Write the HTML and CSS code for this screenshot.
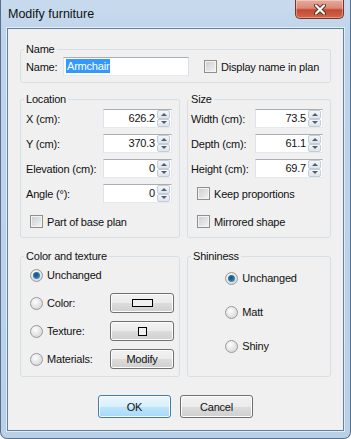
FILE: index.html
```html
<!DOCTYPE html>
<html lang="en">
<head>
    <meta charset="UTF-8">
    <title>Modify furniture</title>
    <link rel="stylesheet" href="styles.css">
</head>
<body>
    <div class="window">
        <div class="titlebar">
            <span class="title">Modify furniture</span>
            <div class="close">
                <svg width="14" height="11" viewBox="0 0 14 11">
                    <path d="M3 1.5 L11 9.5 M11 1.5 L3 9.5" stroke="#5a2a22" stroke-width="4" stroke-linecap="round"/>
                    <path d="M3 1.5 L11 9.5 M11 1.5 L3 9.5" stroke="#fff" stroke-width="2.2" stroke-linecap="round"/>
                </svg>
            </div>
        </div>
        <div class="client">
            <fieldset class="group name-group">
                <legend>Name</legend>
                <div class="name-row">
                    <span class="name-label">Name:</span>
                    <div class="field name-field"><span class="selected">Armchair</span></div>
                    <span class="checkbox name-check"></span>
                    <span class="check-text">Display name in plan</span>
                </div>
            </fieldset>

            <div class="columns">
                <fieldset class="group location">
                    <legend>Location</legend>
                    <div class="spin-grid loc-grid">
                        <span>X (cm):</span>
                        <div class="spinner"><div class="field">626.2</div><div class="arrows"><span class="up"></span><span class="down"></span></div></div>
                        <span>Y (cm):</span>
                        <div class="spinner"><div class="field">370.3</div><div class="arrows"><span class="up"></span><span class="down"></span></div></div>
                        <span>Elevation (cm):</span>
                        <div class="spinner"><div class="field">0</div><div class="arrows"><span class="up"></span><span class="down"></span></div></div>
                        <span>Angle (°):</span>
                        <div class="spinner"><div class="field">0</div><div class="arrows"><span class="up"></span><span class="down"></span></div></div>
                    </div>
                    <div class="check-row loc-check"><span class="checkbox"></span><span class="check-text">Part of base plan</span></div>
                </fieldset>
                <fieldset class="group size">
                    <legend>Size</legend>
                    <div class="spin-grid size-grid">
                        <span>Width (cm):</span>
                        <div class="spinner"><div class="field">73.5</div><div class="arrows"><span class="up"></span><span class="down"></span></div></div>
                        <span>Depth (cm):</span>
                        <div class="spinner"><div class="field">61.1</div><div class="arrows"><span class="up"></span><span class="down"></span></div></div>
                        <span>Height (cm):</span>
                        <div class="spinner"><div class="field">69.7</div><div class="arrows"><span class="up"></span><span class="down"></span></div></div>
                        <div class="check-row size-check"><span class="checkbox"></span><span class="check-text">Keep proportions</span></div>
                    </div>
                    <div class="check-row size-check mirrored"><span class="checkbox"></span><span class="check-text">Mirrored shape</span></div>
                </fieldset>
            </div>

            <div class="columns lower">
                <fieldset class="group color">
                    <legend>Color and texture</legend>
                    <div class="color-grid">
                        <div class="radio-row"><span class="radio on"></span><span>Unchanged</span></div>
                        <span></span>
                        <div class="radio-row"><span class="radio"></span><span>Color:</span></div>
                        <div class="button small"><span class="swatch-rect"></span></div>
                        <div class="radio-row"><span class="radio"></span><span>Texture:</span></div>
                        <div class="button small"><span class="swatch-square"></span></div>
                        <div class="radio-row"><span class="radio"></span><span>Materials:</span></div>
                        <div class="button small">Modify</div>
                    </div>
                </fieldset>
                <fieldset class="group shininess">
                    <legend>Shininess</legend>
                    <div class="shine-list">
                        <div class="radio-row"><span class="radio on"></span><span>Unchanged</span></div>
                        <div class="radio-row"><span class="radio"></span><span>Matt</span></div>
                        <div class="radio-row"><span class="radio"></span><span>Shiny</span></div>
                    </div>
                </fieldset>
            </div>

            <div class="buttons">
                <div class="button default">OK</div>
                <div class="button">Cancel</div>
            </div>
        </div>
    </div>
</body>
</html>
```

FILE: styles.css
```css
* {
    box-sizing: border-box;
}
body {
    margin: 0;
    font-family: "Liberation Sans", Arial, sans-serif;
    font-size: 11px;
    letter-spacing: -0.2px;
    color: #111;
}
.window {
    width: 351px;
    height: 439px;
    border: 1px solid #56718f;
    border-top: none;
    border-radius: 0 0 7px 7px;
    background: linear-gradient(to bottom, #c8dbee 0, #bfd4ea 40px, #bad0e7 100%);
}
.titlebar {
    display: flex;
    justify-content: space-between;
    align-items: flex-start;
    height: 28px;
    padding: 0 6px 0 7px;
}
.title {
    margin-top: 7px;
    font-size: 12.5px;
    letter-spacing: 0;
    color: #111;
}
.close {
    width: 49px;
    height: 19px;
    display: flex;
    align-items: center;
    justify-content: center;
    border: 1px solid #7a3326;
    border-top: none;
    border-radius: 0 0 5px 5px;
    background: linear-gradient(to bottom, #e8aa9c 0, #d98a79 45%, #c44a32 55%, #d2654a 100%);
    box-shadow: inset 0 0 0 1px rgba(255, 255, 255, 0.35);
}
.client {
    height: 403px;
    margin: 0 6px;
    padding: 13px 12px 0 12px;
    background: #f0f0f0;
    border: 1px solid #63809d;
    box-shadow: 0 0 0 1px rgba(255, 255, 255, 0.55);
}
.group {
    margin: 0;
    min-width: 0;
    padding: 0 5px 6px 5px;
    border: 1px solid #d5dfe5;
    border-radius: 3px;
}
.group legend {
    padding: 0 2px;
    margin-left: -2px;
    line-height: 15px;
}
.name-row {
    display: flex;
    align-items: center;
    height: 19px;
}
.name-label {
    width: 37px;
}
.field {
    height: 19px;
    background: #fff;
    border: 1px solid;
    border-color: #abadb3 #dbdfe6 #e3e9ef #e2e3ea;
    line-height: 17px;
}
.name-field {
    width: 126px;
    padding-left: 2px;
}
.selected {
    display: inline-block;
    background: #3399ff;
    color: #fff;
    line-height: 14px;
    padding: 0 1px;
}
.checkbox {
    display: inline-block;
    width: 13px;
    height: 13px;
    border: 1px solid #8e8f8f;
    background: linear-gradient(135deg, #c9ccd1, #f4f4f4);
    box-shadow: inset 0 0 0 1px #f3f3f3;
}
.name-check {
    margin-left: 15px;
}
.check-text {
    margin-left: 4px;
}
.columns {
    display: flex;
    gap: 7px;
    margin-top: 9px;
}
.columns.lower {
    margin-top: 11px;
}
.location,
.color {
    width: 160px;
}
.size,
.shininess {
    flex: 1;
}
.size {
    padding-left: 3px;
}
.spin-grid {
    display: grid;
    grid-auto-rows: 19px;
    row-gap: 6px;
    align-items: center;
    margin-top: 2px;
}
.loc-grid {
    grid-template-columns: 77px 69px;
}
.size-grid {
    grid-template-columns: 64px 68px;
}
.spinner {
    display: flex;
    height: 19px;
}
.spinner .field {
    flex: 1;
    text-align: right;
    padding-right: 2px;
    border-right: none;
}
.arrows {
    width: 15px;
    display: flex;
    flex-direction: column;
    background: #fff;
    border: 1px solid #e3e9ef;
    border-left: none;
    border-top-color: #abadb3;
    padding: 0 1px 0 0;
}
.arrows span {
    flex: 1;
    display: flex;
    align-items: center;
    justify-content: center;
    border: 1px solid #c2cdd8;
    border-radius: 2px;
    background: linear-gradient(to bottom, #f5f6f8, #dfe4ea);
}
.arrows span::after {
    content: "";
    border-left: 3px solid transparent;
    border-right: 3px solid transparent;
}
.arrows .up::after {
    border-bottom: 3px solid #4d5f78;
}
.arrows .down::after {
    border-top: 3px solid #4d5f78;
}
.check-row {
    display: flex;
    align-items: center;
    height: 19px;
}
.loc-check {
    margin-top: 9px;
    padding-left: 4px;
}
.size-check {
    grid-column: 1 / 3;
    padding-left: 6px;
}
.mirrored {
    margin-top: 9px;
}
.color-grid {
    display: grid;
    grid-template-columns: 1fr 64px;
    grid-auto-rows: 20px;
    row-gap: 8px;
    align-items: center;
    margin-top: 1px;
}
.color {
    padding-bottom: 7px;
}
.radio-row {
    display: flex;
    align-items: center;
    gap: 4px;
    height: 20px;
}
.color .radio-row {
    padding-left: 4px;
}
.radio {
    width: 13px;
    height: 13px;
    border-radius: 50%;
    border: 1px solid #9a9a9a;
    background: radial-gradient(circle at 40% 35%, #fdfdfd, #dcdcdc 70%, #cfcfcf);
    display: flex;
    align-items: center;
    justify-content: center;
}
.radio.on::after {
    content: "";
    width: 7px;
    height: 7px;
    border-radius: 50%;
    background: radial-gradient(circle at 45% 40%, #1d4f78 0, #2a6ea3 45%, #6bb8e4 100%);
}
.button {
    height: 23px;
    width: 73px;
    display: flex;
    align-items: center;
    justify-content: center;
    border: 1px solid #707070;
    border-radius: 3px;
    background: linear-gradient(to bottom, #f2f2f2 0, #ebebeb 50%, #dddddd 50%, #cfcfcf 100%);
    box-shadow: inset 0 0 0 1px #fcfcfc;
}
.button.small {
    width: 64px;
    height: 20px;
}
.button.default {
    border-color: #3c7fb1;
    background: linear-gradient(to bottom, #eaf6fd 0, #d9f0fc 50%, #bee6fd 50%, #a7d9f5 100%);
}
.swatch-rect {
    width: 21px;
    height: 8px;
    border: 1px solid #000;
    background: #f0f0f0;
}
.swatch-square {
    width: 9px;
    height: 9px;
    border: 1px solid #000;
    background: #f0f0f0;
}
.shine-list {
    display: flex;
    flex-direction: column;
    gap: 14px;
    width: max-content;
    margin: 4px auto 0;
    padding-left: 4px;
}
.buttons {
    display: flex;
    justify-content: center;
    gap: 9px;
    margin-top: 18px;
}
```
